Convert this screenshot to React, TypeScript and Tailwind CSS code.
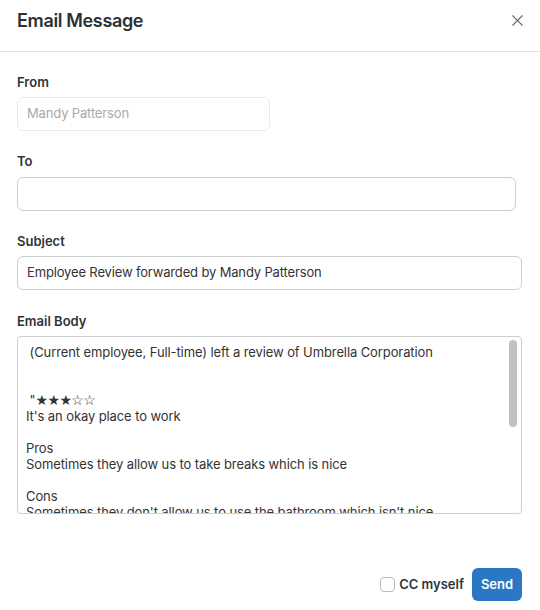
import { X } from "lucide-react";

const intro = ` (Current employee, Full-time) left a review of Umbrella Corporation


 "`;

const rest = `
It's an okay place to work

Pros
Sometimes they allow us to take breaks which is nice

Cons
Sometimes they don't allow us to use the bathroom which isn't nice`;

function Label({ children }: { children: string }) {
  return <div className="text-[13px] leading-4 font-semibold text-[#2f3437]">{children}</div>;
}

export default function App() {
  return (
    <div className="w-[540px] h-[610px] bg-white flex flex-col font-['Inter',sans-serif]">
      <div className="h-[52px] shrink-0 border-b border-[#e3e3e3] px-[17px] pt-[9px] flex justify-between">
        <h1 className="text-[18px] leading-6 font-semibold tracking-[-0.35px] text-[#2b3134]">Email Message</h1>
        <button className="h-6 w-6 -mr-[6px] -mt-[1px] flex items-center justify-center text-[#6b6b6b]">
          <X size={19} strokeWidth={1.4} />
        </button>
      </div>

      <div className="px-[17px] pt-[22px] flex flex-col">
        <Label>From</Label>
        <div className="mt-[7px] w-[253px] h-[34px] rounded-md border border-[#ebebeb] px-[9px] flex items-center text-[13px] tracking-[-0.15px] text-[#a9a9a9]">
          Mandy Patterson
        </div>

        <div className="mt-[22px]">
          <Label>To</Label>
        </div>
        <div className="mt-[8px] w-[499px] h-[34px] rounded-md border border-[#cfcfcf]" />

        <div className="mt-[22px]">
          <Label>Subject</Label>
        </div>
        <div className="mt-[7px] w-[505px] h-[34px] rounded-md border border-[#cfcfcf] px-[9px] flex items-center text-[13px] tracking-[-0.15px] text-[#333]">
          Employee Review forwarded by Mandy Patterson
        </div>

        <div className="mt-[23px]">
          <Label>Email Body</Label>
        </div>
        <div className="relative mt-[7px] w-[505px] h-[178px] rounded-[4px] border border-[#cfcfcf] overflow-hidden">
          <div className="pl-[8px] pt-[7px] pr-[20px] whitespace-pre text-[13px] leading-4 tracking-[-0.1px] text-[#333]">
            {intro}
            <span className="font-['DejaVu_Sans',sans-serif] text-[14px] leading-none tracking-[-0.6px]">★★★☆☆</span>
            {rest}
          </div>
          <div className="absolute right-[4px] top-[3px] w-[8px] h-[87px] rounded-full bg-[#c2c2c2]" />
        </div>
      </div>

      <div className="mt-auto px-[18px] pb-[9px] flex justify-end items-center">
        <label className="flex items-center gap-[4px] mr-[8px]">
          <span className="w-[15px] h-[15px] rounded-[4px] border border-[#bdbdbd] bg-white" />
          <span className="text-[13px] font-semibold text-[#2f3437]">CC myself</span>
        </label>
        <button className="h-[33px] w-[50px] rounded-md bg-[#2a77c4] text-white text-[13px] font-semibold">Send</button>
      </div>
    </div>
  );
}
